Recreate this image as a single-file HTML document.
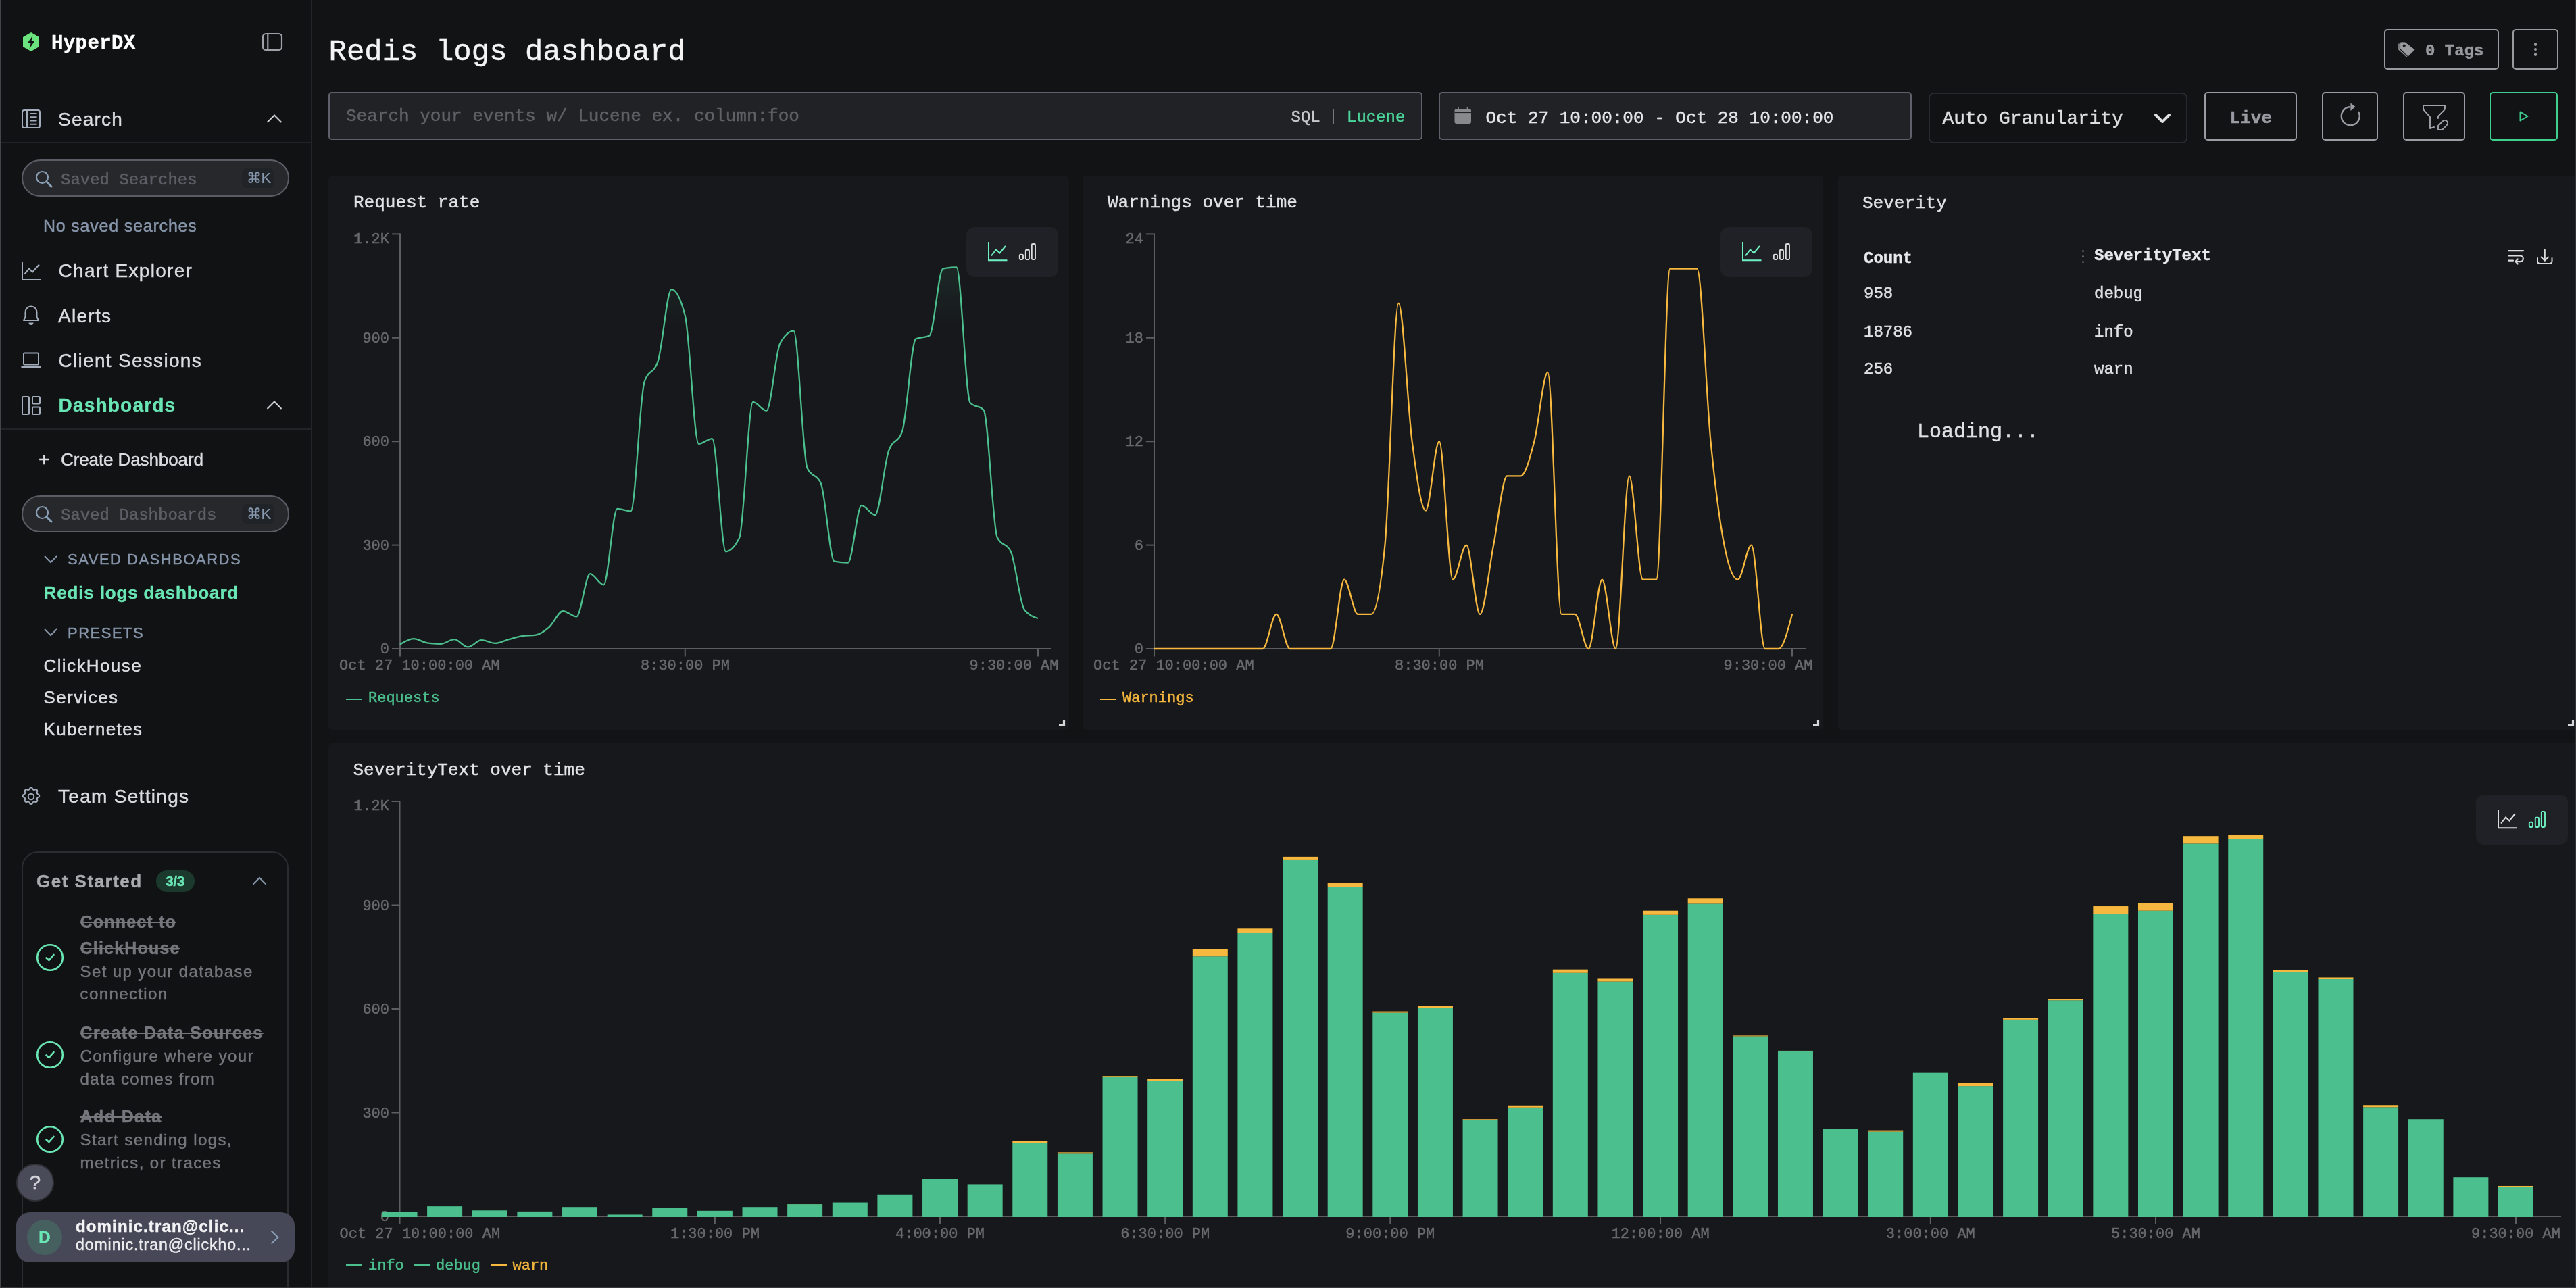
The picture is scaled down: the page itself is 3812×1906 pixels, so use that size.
<!DOCTYPE html><html><head><meta charset="utf-8"><title>Redis logs dashboard</title><style>html,body{margin:0;padding:0;}div{-webkit-text-stroke:0.45px currentColor;}body{width:3812px;height:1906px;overflow:hidden;position:relative;background:#121315;}</style></head><body><div style="position:absolute;left:0;top:0;width:3812px;height:1906px;will-change:transform">
<div style="position:absolute;left:0.0px;top:0.0px;width:460.0px;height:1906.0px;box-sizing:border-box;background:#111214;"></div>
<div style="position:absolute;left:460.0px;top:0.0px;width:2.0px;height:1906.0px;box-sizing:border-box;background:#242528;"></div>
<svg style="position:absolute;left:32.0px;top:46.0px;" width="28.0" height="32.0" viewBox="0 0 28 32" fill="none"><path d="M14 2 L26 9 V23 L14 30 L2 23 V9 Z" fill="#6be47f"/><path d="M16.5 6.5 L8.5 18 H13.5 L11.5 26 L19.5 14.5 H14.5 Z" fill="#121315"/></svg>
<div style="position:absolute;left:76.0px;top:49.68px;font-family:'Liberation Mono', monospace;font-size:29px;line-height:29px;font-weight:700;color:#ffffff;white-space:pre;letter-spacing:0.4px;">HyperDX</div>
<svg style="position:absolute;left:386.0px;top:47.0px;" width="34.0" height="30.0" viewBox="0 0 34 30" fill="none"><rect x="3" y="3" width="28" height="24" rx="4.5" stroke="#a0a1a8" stroke-width="2.2"/><line x1="10.3" y1="3" x2="10.3" y2="27" stroke="#a0a1a8" stroke-width="2.2"/></svg>
<svg style="position:absolute;left:30.0px;top:160.0px;" width="32.0" height="32.0" viewBox="0 0 32 32" fill="none"><rect x="3" y="3" width="26" height="26" rx="3" stroke="#a3adbb" stroke-width="2"/><line x1="10" y1="3" x2="10" y2="29" stroke="#a3adbb" stroke-width="2"/><path d="M14.5 8h10M14.5 13.2h10M14.5 18.5h10M14.5 23.7h10" stroke="#a3adbb" stroke-width="2"/></svg>
<div style="position:absolute;left:86.0px;top:163.09px;font-family:'Liberation Sans', sans-serif;font-size:28px;line-height:28px;font-weight:400;color:#dcdde0;white-space:pre;letter-spacing:1.2px;">Search</div>
<svg style="position:absolute;left:392.0px;top:166.0px;" width="28.0" height="20.0" viewBox="0 0 28 20" fill="none"><path d="M3.5 15 L14 4.5 L24.5 15" stroke="#d0d2d6" stroke-width="2"/></svg>
<div style="position:absolute;left:0.0px;top:210.0px;width:460.0px;height:2.0px;box-sizing:border-box;background:#222326;"></div>
<div style="position:absolute;left:32.0px;top:236.4px;width:396.0px;height:55.0px;box-sizing:border-box;background:#27282c;border:2px solid #5b5c66;border-radius:28px;"></div>
<svg style="position:absolute;left:50.0px;top:249.9px;" width="30.0" height="30.0" viewBox="0 0 30 30" fill="none"><circle cx="12.5" cy="12.5" r="8.5" stroke="#8aa0b6" stroke-width="2.2"/><path d="M18.8 18.8 L26 26" stroke="#8aa0b6" stroke-width="3" stroke-linecap="round"/></svg>
<div style="position:absolute;left:90.0px;top:254.51px;font-family:'Liberation Mono', monospace;font-size:24px;line-height:24px;font-weight:400;color:#5d5f66;white-space:pre;">Saved Searches</div>
<div style="position:absolute;left:358.0px;top:249.4px;width:48.0px;height:29.0px;box-sizing:border-box;background:#202327;border-radius:7px;"></div>
<div style="position:absolute;left:364.5px;top:253.27px;font-family:'Liberation Sans', sans-serif;font-size:22px;line-height:22px;font-weight:400;color:#8698ad;white-space:pre;-webkit-text-stroke:0.2px currentColor;">&#8984;K</div>
<div style="position:absolute;left:64.0px;top:322.03px;font-family:'Liberation Sans', sans-serif;font-size:25px;line-height:25px;font-weight:400;color:#8796ab;white-space:pre;letter-spacing:0.8px;">No saved searches</div>
<svg style="position:absolute;left:30.0px;top:385.0px;" width="32.0" height="32.0" viewBox="0 0 32 32" fill="none"><path d="M3 2 V29 H30" stroke="#a3adbb" stroke-width="2"/><path d="M6.5 20.5 L13 12.5 L18 17.5 L28 6.5" stroke="#a3adbb" stroke-width="2"/></svg>
<div style="position:absolute;left:86.5px;top:387.19px;font-family:'Liberation Sans', sans-serif;font-size:28px;line-height:28px;font-weight:400;color:#dcdde0;white-space:pre;letter-spacing:1.3px;">Chart Explorer</div>
<svg style="position:absolute;left:30.0px;top:450.0px;" width="32.0" height="34.0" viewBox="0 0 32 34" fill="none"><path d="M16 3.5 c-5.2 0 -8.5 4 -8.5 9 v6.5 l-2.5 5 h22 l-2.5 -5 v-6.5 c0 -5 -3.3 -9 -8.5 -9 z" stroke="#a3adbb" stroke-width="2" stroke-linejoin="round"/><path d="M12.5 27.5 a3.5 3.5 0 0 0 7 0 z" fill="#a3adbb"/></svg>
<div style="position:absolute;left:86.0px;top:453.59px;font-family:'Liberation Sans', sans-serif;font-size:28px;line-height:28px;font-weight:400;color:#dcdde0;white-space:pre;letter-spacing:1.3px;">Alerts</div>
<svg style="position:absolute;left:30.0px;top:518.0px;" width="32.0" height="30.0" viewBox="0 0 32 30" fill="none"><rect x="5" y="4.5" width="22" height="17" rx="1.5" stroke="#a3adbb" stroke-width="2"/><path d="M2.5 25 H29.5" stroke="#a3adbb" stroke-width="2.4" stroke-linecap="round"/></svg>
<div style="position:absolute;left:86.5px;top:519.89px;font-family:'Liberation Sans', sans-serif;font-size:28px;line-height:28px;font-weight:400;color:#dcdde0;white-space:pre;letter-spacing:1.3px;">Client Sessions</div>
<svg style="position:absolute;left:30.0px;top:584.0px;" width="32.0" height="32.0" viewBox="0 0 32 32" fill="none"><rect x="3" y="3" width="10" height="26" rx="1.5" stroke="#a3adbb" stroke-width="2"/><rect x="18" y="3" width="11" height="10.5" rx="1.5" stroke="#a3adbb" stroke-width="2"/><rect x="18" y="18.5" width="11" height="10.5" rx="1.5" stroke="#a3adbb" stroke-width="2"/></svg>
<div style="position:absolute;left:86.5px;top:586.29px;font-family:'Liberation Sans', sans-serif;font-size:28px;line-height:28px;font-weight:700;color:#6ae6b5;white-space:pre;letter-spacing:1.2px;">Dashboards</div>
<svg style="position:absolute;left:392.0px;top:590.0px;" width="28.0" height="20.0" viewBox="0 0 28 20" fill="none"><path d="M3.5 15 L14 4.5 L24.5 15" stroke="#d0d2d6" stroke-width="2"/></svg>
<div style="position:absolute;left:0.0px;top:634.0px;width:460.0px;height:2.0px;box-sizing:border-box;background:#222326;"></div>
<div style="position:absolute;left:57.0px;top:666.79px;font-family:'Liberation Sans', sans-serif;font-size:26px;line-height:26px;font-weight:400;color:#dcdde0;white-space:pre;font-size:28px;">+</div>
<div style="position:absolute;left:90.0px;top:666.79px;font-family:'Liberation Sans', sans-serif;font-size:26px;line-height:26px;font-weight:400;color:#dcdde0;white-space:pre;letter-spacing:-0.1px;">Create Dashboard</div>
<div style="position:absolute;left:32.0px;top:732.5px;width:396.0px;height:55.3px;box-sizing:border-box;background:#27282c;border:2px solid #5b5c66;border-radius:28px;"></div>
<svg style="position:absolute;left:50.0px;top:746.1px;" width="30.0" height="30.0" viewBox="0 0 30 30" fill="none"><circle cx="12.5" cy="12.5" r="8.5" stroke="#8aa0b6" stroke-width="2.2"/><path d="M18.8 18.8 L26 26" stroke="#8aa0b6" stroke-width="3" stroke-linecap="round"/></svg>
<div style="position:absolute;left:90.0px;top:750.76px;font-family:'Liberation Mono', monospace;font-size:24px;line-height:24px;font-weight:400;color:#5d5f66;white-space:pre;">Saved Dashboards</div>
<div style="position:absolute;left:358.0px;top:745.6px;width:48.0px;height:29.0px;box-sizing:border-box;background:#202327;border-radius:7px;"></div>
<div style="position:absolute;left:364.5px;top:749.52px;font-family:'Liberation Sans', sans-serif;font-size:22px;line-height:22px;font-weight:400;color:#8698ad;white-space:pre;-webkit-text-stroke:0.2px currentColor;">&#8984;K</div>
<svg style="position:absolute;left:63.0px;top:818.0px;" width="24.0" height="18.0" viewBox="0 0 24 18" fill="none"><path d="M3 5 L12 14 L21 5" stroke="#8796ab" stroke-width="2"/></svg>
<div style="position:absolute;left:100.0px;top:817.17px;font-family:'Liberation Sans', sans-serif;font-size:22px;line-height:22px;font-weight:400;color:#8796ab;white-space:pre;letter-spacing:1.5px;">SAVED DASHBOARDS</div>
<div style="position:absolute;left:64.5px;top:863.89px;font-family:'Liberation Sans', sans-serif;font-size:26px;line-height:26px;font-weight:700;color:#6ae6b5;white-space:pre;letter-spacing:0.85px;">Redis logs dashboard</div>
<svg style="position:absolute;left:63.0px;top:926.0px;" width="24.0" height="18.0" viewBox="0 0 24 18" fill="none"><path d="M3 5 L12 14 L21 5" stroke="#8796ab" stroke-width="2"/></svg>
<div style="position:absolute;left:100.0px;top:925.67px;font-family:'Liberation Sans', sans-serif;font-size:22px;line-height:22px;font-weight:400;color:#8796ab;white-space:pre;letter-spacing:1.5px;">PRESETS</div>
<div style="position:absolute;left:64.5px;top:971.69px;font-family:'Liberation Sans', sans-serif;font-size:26px;line-height:26px;font-weight:400;color:#dcdde2;white-space:pre;letter-spacing:1.4px;">ClickHouse</div>
<div style="position:absolute;left:64.5px;top:1019.19px;font-family:'Liberation Sans', sans-serif;font-size:26px;line-height:26px;font-weight:400;color:#dcdde2;white-space:pre;letter-spacing:1.4px;">Services</div>
<div style="position:absolute;left:64.5px;top:1066.19px;font-family:'Liberation Sans', sans-serif;font-size:26px;line-height:26px;font-weight:400;color:#dcdde2;white-space:pre;letter-spacing:1.4px;">Kubernetes</div>
<svg style="position:absolute;left:30.0px;top:1163.0px;" width="32.0" height="32.0" viewBox="0 0 32 32" fill="none"><path d="M13.7 4.2 c.6-2.4 4-2.4 4.6 0 a2.4 2.4 0 0 0 3.5 1.5 c2.1-1.3 4.5 1.1 3.2 3.2 a2.4 2.4 0 0 0 1.5 3.5 c2.4.6 2.4 4 0 4.6 a2.4 2.4 0 0 0 -1.5 3.5 c1.3 2.1-1.1 4.5-3.2 3.2 a2.4 2.4 0 0 0 -3.5 1.5 c-.6 2.4-4 2.4-4.6 0 a2.4 2.4 0 0 0 -3.5 -1.5 c-2.1 1.3-4.5-1.1-3.2-3.2 a2.4 2.4 0 0 0 -1.5 -3.5 c-2.4-.6-2.4-4 0-4.6 a2.4 2.4 0 0 0 1.5 -3.5 c-1.3-2.1 1.1-4.5 3.2-3.2 a2.4 2.4 0 0 0 3.5 -1.5z" stroke="#a3adbb" stroke-width="2"/><circle cx="16" cy="16" r="4.3" stroke="#a3adbb" stroke-width="2"/></svg>
<div style="position:absolute;left:86.0px;top:1165.29px;font-family:'Liberation Sans', sans-serif;font-size:28px;line-height:28px;font-weight:400;color:#dcdde0;white-space:pre;letter-spacing:1.3px;">Team Settings</div>
<div style="position:absolute;left:32.3px;top:1260.2px;width:395.2px;height:729.8px;box-sizing:border-box;border:2px solid #2b2c30;border-radius:24px;"></div>
<div style="position:absolute;left:54.0px;top:1290.99px;font-family:'Liberation Sans', sans-serif;font-size:26px;line-height:26px;font-weight:700;color:#a9aaae;white-space:pre;letter-spacing:1.5px;">Get Started</div>
<div style="position:absolute;left:231.0px;top:1288.0px;width:56.6px;height:31.7px;box-sizing:border-box;background:#1b3a2d;border-radius:16px;"></div>
<div style="position:absolute;left:-1740.7px;width:4000px;text-align:center;top:1293.67px;font-family:'Liberation Sans', sans-serif;font-size:20px;line-height:20px;font-weight:700;color:#6ae6b5;white-space:pre;">3/3</div>
<svg style="position:absolute;left:370.0px;top:1294.0px;" width="28.0" height="20.0" viewBox="0 0 28 20" fill="none"><path d="M4.5 14.5 L14 5 L23.5 14.5" stroke="#8796ab" stroke-width="2"/></svg>
<svg style="position:absolute;left:52.0px;top:1395.0px;" width="44.0" height="44.0" viewBox="0 0 44 44" fill="none"><circle cx="22" cy="22" r="18.8" stroke="#6ae6b5" stroke-width="2.6"/><path d="M16.5 22.5 L20.5 26 L27.5 18" stroke="#6ae6b5" stroke-width="2.6" stroke-linecap="round" stroke-linejoin="round"/></svg>
<div style="position:absolute;left:118.5px;top:1352.43px;font-family:'Liberation Sans', sans-serif;font-size:25px;line-height:25px;font-weight:700;color:#76777d;white-space:pre;letter-spacing:1.2px;text-decoration:line-through;text-decoration-thickness:2px;">Connect to</div>
<div style="position:absolute;left:118.5px;top:1390.83px;font-family:'Liberation Sans', sans-serif;font-size:25px;line-height:25px;font-weight:700;color:#76777d;white-space:pre;letter-spacing:1.2px;text-decoration:line-through;text-decoration-thickness:2px;">ClickHouse</div>
<div style="position:absolute;left:118.5px;top:1425.68px;font-family:'Liberation Sans', sans-serif;font-size:24px;line-height:24px;font-weight:400;color:#76777d;white-space:pre;letter-spacing:1.4px;">Set up your database</div>
<div style="position:absolute;left:118.5px;top:1459.48px;font-family:'Liberation Sans', sans-serif;font-size:24px;line-height:24px;font-weight:400;color:#76777d;white-space:pre;letter-spacing:1.4px;">connection</div>
<svg style="position:absolute;left:52.0px;top:1539.0px;" width="44.0" height="44.0" viewBox="0 0 44 44" fill="none"><circle cx="22" cy="22" r="18.8" stroke="#6ae6b5" stroke-width="2.6"/><path d="M16.5 22.5 L20.5 26 L27.5 18" stroke="#6ae6b5" stroke-width="2.6" stroke-linecap="round" stroke-linejoin="round"/></svg>
<div style="position:absolute;left:118.5px;top:1515.53px;font-family:'Liberation Sans', sans-serif;font-size:25px;line-height:25px;font-weight:700;color:#76777d;white-space:pre;letter-spacing:1.4px;text-decoration:line-through;text-decoration-thickness:2px;">Create Data Sources</div>
<div style="position:absolute;left:118.5px;top:1550.68px;font-family:'Liberation Sans', sans-serif;font-size:24px;line-height:24px;font-weight:400;color:#76777d;white-space:pre;letter-spacing:1.4px;">Configure where your</div>
<div style="position:absolute;left:118.5px;top:1584.68px;font-family:'Liberation Sans', sans-serif;font-size:24px;line-height:24px;font-weight:400;color:#76777d;white-space:pre;letter-spacing:1.4px;">data comes from</div>
<svg style="position:absolute;left:52.0px;top:1664.2px;" width="44.0" height="44.0" viewBox="0 0 44 44" fill="none"><circle cx="22" cy="22" r="18.8" stroke="#6ae6b5" stroke-width="2.6"/><path d="M16.5 22.5 L20.5 26 L27.5 18" stroke="#6ae6b5" stroke-width="2.6" stroke-linecap="round" stroke-linejoin="round"/></svg>
<div style="position:absolute;left:118.5px;top:1639.73px;font-family:'Liberation Sans', sans-serif;font-size:25px;line-height:25px;font-weight:700;color:#76777d;white-space:pre;letter-spacing:1.4px;text-decoration:line-through;text-decoration-thickness:2px;">Add Data</div>
<div style="position:absolute;left:118.5px;top:1675.08px;font-family:'Liberation Sans', sans-serif;font-size:24px;line-height:24px;font-weight:400;color:#76777d;white-space:pre;letter-spacing:1.4px;">Start sending logs,</div>
<div style="position:absolute;left:118.5px;top:1708.78px;font-family:'Liberation Sans', sans-serif;font-size:24px;line-height:24px;font-weight:400;color:#76777d;white-space:pre;letter-spacing:1.4px;">metrics, or traces</div>
<div style="position:absolute;left:24.0px;top:1722.3px;width:55.5px;height:55.4px;box-sizing:border-box;background:#4a4b59;border:2px solid #2f3036;border-radius:28px;"></div>
<div style="position:absolute;left:-1948.2px;width:4000px;text-align:center;top:1734.60px;font-family:'Liberation Sans', sans-serif;font-size:30px;line-height:30px;font-weight:400;color:#d3d3da;white-space:pre;">?</div>
<div style="position:absolute;left:24.0px;top:1794.3px;width:411.7px;height:73.6px;box-sizing:border-box;background:#474857;border-radius:20px;"></div>
<div style="position:absolute;left:40.0px;top:1805.0px;width:52.0px;height:52.0px;box-sizing:border-box;background:#46605f;border-radius:26px;"></div>
<div style="position:absolute;left:-1934.0px;width:4000px;text-align:center;top:1819.18px;font-family:'Liberation Sans', sans-serif;font-size:24px;line-height:24px;font-weight:700;color:#6ae6b5;white-space:pre;">D</div>
<div style="position:absolute;left:112.0px;top:1802.88px;font-family:'Liberation Sans', sans-serif;font-size:24px;line-height:24px;font-weight:700;color:#f4f4f6;white-space:pre;letter-spacing:1.15px;">dominic.tran@clic...</div>
<div style="position:absolute;left:112.0px;top:1831.43px;font-family:'Liberation Sans', sans-serif;font-size:23px;line-height:23px;font-weight:400;color:#ededf0;white-space:pre;letter-spacing:0.95px;">dominic.tran@clickho...</div>
<svg style="position:absolute;left:396.0px;top:1818.0px;" width="22.0" height="26.0" viewBox="0 0 22 26" fill="none"><path d="M5.5 3.5 L15.5 13 L5.5 22.5" stroke="#8aa0b8" stroke-width="2"/></svg>
<div style="position:absolute;left:486.5px;top:55.49px;font-family:'Liberation Mono', monospace;font-size:44px;line-height:44px;font-weight:400;color:#f4f4f5;white-space:pre;">Redis logs dashboard</div>
<div style="position:absolute;left:3528.2px;top:43.0px;width:169.4px;height:59.5px;box-sizing:border-box;border:2px solid #9a9a9e;border-radius:5px;"></div>
<svg style="position:absolute;left:3546.0px;top:59.0px;" width="30.0" height="28.0" viewBox="0 0 30 28" fill="none"><path d="M6.3 4.4 Q6.3 3.9 6.8 3.9 H13.1 L27 14.6 L17.6 24 L6.3 12.9 Z" fill="#9a9a9e" stroke="#9a9a9e" stroke-width="1" stroke-linejoin="round"/><circle cx="11.7" cy="8.4" r="2" fill="#121315"/><path d="M4 5.6 V14.1 L15.9 25.2" stroke="#9a9a9e" stroke-width="1.5"/></svg>
<div style="position:absolute;left:3589.0px;top:64.01px;font-family:'Liberation Mono', monospace;font-size:24px;line-height:24px;font-weight:700;color:#9a9a9e;white-space:pre;">0 Tags</div>
<div style="position:absolute;left:3718.4px;top:43.0px;width:67.4px;height:59.5px;box-sizing:border-box;border:2px solid #9a9a9e;border-radius:5px;"></div>
<div style="position:absolute;left:3749.7px;top:63.1px;width:4.6px;height:4.6px;box-sizing:border-box;background:#9a9a9e;border-radius:3px;"></div>
<div style="position:absolute;left:3749.7px;top:70.8px;width:4.6px;height:4.6px;box-sizing:border-box;background:#9a9a9e;border-radius:3px;"></div>
<div style="position:absolute;left:3749.7px;top:78.4px;width:4.6px;height:4.6px;box-sizing:border-box;background:#9a9a9e;border-radius:3px;"></div>
<div style="position:absolute;left:486.0px;top:136.2px;width:1618.5px;height:71.3px;box-sizing:border-box;background:#212226;border:2px solid #5f606b;border-radius:5px;"></div>
<div style="position:absolute;left:512.0px;top:159.08px;font-family:'Liberation Mono', monospace;font-size:26px;line-height:26px;font-weight:400;color:#5f6167;white-space:pre;">Search your events w/ Lucene ex. column:foo</div>
<div style="position:absolute;left:1910.5px;top:161.91px;font-family:'Liberation Mono', monospace;font-size:24px;line-height:24px;font-weight:400;color:#c9c9cc;white-space:pre;">SQL</div>
<div style="position:absolute;left:1972.2px;top:161.0px;width:2.2px;height:22.5px;box-sizing:border-box;background:#77787d;"></div>
<div style="position:absolute;left:1993.0px;top:161.91px;font-family:'Liberation Mono', monospace;font-size:24px;line-height:24px;font-weight:400;color:#4cd69b;white-space:pre;">Lucene</div>
<div style="position:absolute;left:2129.2px;top:136.2px;width:699.5px;height:71.3px;box-sizing:border-box;background:#212226;border:2px solid #5f606b;border-radius:5px;"></div>
<svg style="position:absolute;left:2150.0px;top:157.0px;" width="30.0" height="28.0" viewBox="0 0 30 28" fill="none"><rect x="2.5" y="4" width="24.5" height="22" rx="3" fill="#88898d"/><path d="M2.5 9.5 H27" stroke="#212226" stroke-width="1.2"/><path d="M8 2 V5 M21.5 2 V5" stroke="#88898d" stroke-width="1.6"/></svg>
<div style="position:absolute;left:2198.5px;top:162.38px;font-family:'Liberation Mono', monospace;font-size:26px;line-height:26px;font-weight:400;color:#e6e6e8;white-space:pre;">Oct 27 10:00:00 - Oct 28 10:00:00</div>
<div style="position:absolute;left:2853.7px;top:136.5px;width:383.3px;height:75.0px;box-sizing:border-box;background:#111214;border:2px solid #27282c;border-radius:8px;"></div>
<div style="position:absolute;left:2874.5px;top:162.35px;font-family:'Liberation Mono', monospace;font-size:28px;line-height:28px;font-weight:400;color:#dedee0;white-space:pre;letter-spacing:-0.1px;">Auto Granularity</div>
<svg style="position:absolute;left:3184.0px;top:162.0px;" width="32.0" height="26.0" viewBox="0 0 32 26" fill="none"><path d="M6 8 L16 18 L26 8" stroke="#e0e0e2" stroke-width="4" stroke-linecap="round" stroke-linejoin="round"/></svg>
<div style="position:absolute;left:3262.1px;top:136.3px;width:137.4px;height:71.3px;box-sizing:border-box;border:2px solid #9b9ca3;border-radius:5px;"></div>
<div style="position:absolute;left:1330.8px;width:4000px;text-align:center;top:162.38px;font-family:'Liberation Mono', monospace;font-size:26px;line-height:26px;font-weight:700;color:#9b9ca3;white-space:pre;">Live</div>
<div style="position:absolute;left:3436.2px;top:136.3px;width:83.3px;height:71.3px;box-sizing:border-box;border:2px solid #9b9ca3;border-radius:5px;"></div>
<svg style="position:absolute;left:3458.0px;top:150.0px;" width="40.0" height="40.0" viewBox="0 0 40 40" fill="none"><path d="M20.2 8.3 A13.5 13.5 0 1 0 31.9 15" stroke="#9b9ca3" stroke-width="2.4"/><path d="M20.4 2.6 L27.6 8 L20.4 13.9 Z" fill="#9b9ca3"/></svg>
<div style="position:absolute;left:3556.4px;top:136.3px;width:91.3px;height:71.3px;box-sizing:border-box;border:2px solid #9b9ca3;border-radius:5px;"></div>
<svg style="position:absolute;left:3577.7px;top:147.5px;" width="48.0" height="48.0" viewBox="0 0 48 48" fill="none"><g transform="scale(2)"><path d="M12 20l-3 1v-8.5l-4.48 -4.928a2 2 0 0 1 -.52 -1.345v-2.227h16v2.172a2 2 0 0 1 -.586 1.414l-4.414 4.414v1.5" stroke="#a3a4ab" stroke-width="0.95" stroke-linecap="round" stroke-linejoin="round"/><path d="M18.42 15.61a2.1 2.1 0 0 1 2.97 2.97l-3.39 3.42h-3v-3l3.42 -3.39z" stroke="#a3a4ab" stroke-width="0.95" stroke-linecap="round" stroke-linejoin="round"/></g></svg>
<div style="position:absolute;left:3684.1px;top:136.3px;width:101.4px;height:71.3px;box-sizing:border-box;border:2px solid #3fd08f;border-radius:5px;"></div>
<svg style="position:absolute;left:3724.0px;top:161.0px;" width="22.0" height="22.0" viewBox="0 0 22 22" fill="none"><path d="M5.5 4.5 L16.5 11 L5.5 17.5 Z" stroke="#3fd08f" stroke-width="2" stroke-linejoin="round"/></svg>
<div style="position:absolute;left:486.0px;top:260.0px;width:1096.0px;height:820.0px;box-sizing:border-box;background:#17181b;border-radius:5px;"></div>
<div style="position:absolute;left:1602.0px;top:260.0px;width:1096.0px;height:820.0px;box-sizing:border-box;background:#17181b;border-radius:5px;"></div>
<div style="position:absolute;left:2720.0px;top:260.0px;width:1110.0px;height:820.0px;box-sizing:border-box;background:#17181b;border-radius:5px;"></div>
<div style="position:absolute;left:486.0px;top:1100.0px;width:3344.0px;height:890.0px;box-sizing:border-box;background:#17181b;border-radius:5px;"></div>
<div style="position:absolute;left:523.0px;top:287.48px;font-family:'Liberation Mono', monospace;font-size:26px;line-height:26px;font-weight:400;color:#e2e2e5;white-space:pre;">Request rate</div>
<div style="position:absolute;left:1430.0px;top:336.0px;width:136.0px;height:74.0px;box-sizing:border-box;background:#1f2126;border-radius:12px;"></div>
<svg style="position:absolute;left:1430.0px;top:336.0px;" width="136.0" height="74.0" viewBox="0 0 136 74" fill="none"><path d="M33 22 V49.2 H60.5" stroke="#6ff1c2" stroke-width="2"/><path d="M37 42.5 L44 33.5 L49.5 38.5 L58 28" stroke="#6ff1c2" stroke-width="2"/><rect x="78.8" y="40.8" width="5.2" height="7.2" rx="1.4" stroke="#dddddd" stroke-width="1.9"/><rect x="87.8" y="33.8" width="5.2" height="14.2" rx="1.4" stroke="#dddddd" stroke-width="1.9"/><rect x="96.8" y="25" width="5.2" height="23" rx="1.4" stroke="#dddddd" stroke-width="1.9"/></svg>
<svg style="position:absolute;left:1566.0px;top:1064.0px;" width="11.0" height="11.0" viewBox="0 0 11 11" fill="none"><path d="M1 8.5 H8.5 V1" stroke="#d6d6d6" stroke-width="3.2"/></svg>
<svg style="position:absolute;left:0;top:0" width="3812" height="1100" viewBox="0 0 3812 1100"><rect x="591" y="345.4" width="2" height="614.6" fill="#5e5e60"/><rect x="592" y="959.0" width="964" height="2" fill="#5e5e60"/><rect x="580" y="959.0" width="12" height="2" fill="#5e5e60"/><rect x="580" y="805.6" width="12" height="2" fill="#5e5e60"/><rect x="580" y="652.2" width="12" height="2" fill="#5e5e60"/><rect x="580" y="498.8" width="12" height="2" fill="#5e5e60"/><rect x="580" y="345.4" width="12" height="2" fill="#5e5e60"/><rect x="591.0" y="960.0" width="2" height="11.5" fill="#5e5e60"/><rect x="1012.7872340425531" y="960.0" width="2" height="11.5" fill="#5e5e60"/><rect x="1535.0" y="960.0" width="2" height="11.5" fill="#5e5e60"/><defs><linearGradient id="g1" x1="0" y1="395.5" x2="0" y2="960.0" gradientUnits="userSpaceOnUse"><stop offset="0" stop-color="#4cbf8e" stop-opacity="0.1"/><stop offset="0.16" stop-color="#4cbf8e" stop-opacity="0"/></linearGradient></defs><path d="M592.00,953.61C598.70,949.39 605.39,945.17 612.09,945.17C618.78,945.17 625.48,950.28 632.17,951.31C638.87,952.33 645.56,952.84 652.26,952.84C658.95,952.84 665.65,946.19 672.34,946.19C679.04,946.19 685.73,957.44 692.43,957.44C699.12,957.44 705.82,947.22 712.51,947.22C719.21,947.22 725.90,951.82 732.60,951.82C739.29,951.82 745.99,947.98 752.68,946.19C759.38,944.40 766.07,942.10 772.77,941.08C779.46,940.06 786.16,940.57 792.85,939.55C799.55,938.52 806.24,933.67 812.94,927.79C819.63,921.91 826.33,904.26 833.02,904.26C839.72,904.26 846.41,912.45 853.11,912.45C859.80,912.45 866.50,849.04 873.19,849.04C879.89,849.04 886.58,865.40 893.28,865.40C899.97,865.40 906.67,752.91 913.36,752.91C920.06,752.91 926.75,756.49 933.45,756.49C940.14,756.49 946.84,585.70 953.53,565.25C960.23,544.80 966.92,555.02 973.62,534.57C980.31,514.12 987.01,428.21 993.70,428.21C1000.40,428.21 1007.09,441.17 1013.79,467.07C1020.48,492.98 1027.18,656.78 1033.87,656.78C1040.57,656.78 1047.26,649.11 1053.96,649.11C1060.65,649.11 1067.35,816.32 1074.04,816.32C1080.74,816.32 1087.43,809.50 1094.13,795.86C1100.82,782.23 1107.52,594.91 1114.21,594.91C1120.91,594.91 1127.60,607.69 1134.30,607.69C1140.99,607.69 1147.69,520.25 1154.38,507.98C1161.08,495.71 1167.77,489.57 1174.47,489.57C1181.16,489.57 1187.86,677.57 1194.55,692.57C1201.25,707.57 1207.94,700.07 1214.64,715.07C1221.33,730.07 1228.03,829.27 1234.72,830.63C1241.42,832.00 1248.11,832.68 1254.81,832.68C1261.50,832.68 1268.20,747.80 1274.89,747.80C1281.59,747.80 1288.28,762.11 1294.98,762.11C1301.67,762.11 1308.37,686.10 1315.06,667.01C1321.76,647.92 1328.45,657.46 1335.15,638.37C1341.84,619.28 1348.54,504.40 1355.23,501.33C1361.93,498.27 1368.62,499.80 1375.32,496.73C1382.01,493.66 1388.71,398.90 1395.40,397.53C1402.10,396.17 1408.79,395.49 1415.49,395.49C1422.18,395.49 1428.88,588.77 1435.57,595.93C1442.27,603.09 1448.96,599.51 1455.66,606.67C1462.35,613.83 1469.05,781.37 1475.74,795.35C1482.44,809.33 1489.13,802.34 1495.83,816.32C1502.52,830.29 1509.22,893.70 1515.91,902.22C1522.61,910.74 1529.30,912.87 1536.00,915.00L1536.00,960.0L592.00,960.0Z" fill="url(#g1)"/><path d="M592.00,953.61C598.70,949.39 605.39,945.17 612.09,945.17C618.78,945.17 625.48,950.28 632.17,951.31C638.87,952.33 645.56,952.84 652.26,952.84C658.95,952.84 665.65,946.19 672.34,946.19C679.04,946.19 685.73,957.44 692.43,957.44C699.12,957.44 705.82,947.22 712.51,947.22C719.21,947.22 725.90,951.82 732.60,951.82C739.29,951.82 745.99,947.98 752.68,946.19C759.38,944.40 766.07,942.10 772.77,941.08C779.46,940.06 786.16,940.57 792.85,939.55C799.55,938.52 806.24,933.67 812.94,927.79C819.63,921.91 826.33,904.26 833.02,904.26C839.72,904.26 846.41,912.45 853.11,912.45C859.80,912.45 866.50,849.04 873.19,849.04C879.89,849.04 886.58,865.40 893.28,865.40C899.97,865.40 906.67,752.91 913.36,752.91C920.06,752.91 926.75,756.49 933.45,756.49C940.14,756.49 946.84,585.70 953.53,565.25C960.23,544.80 966.92,555.02 973.62,534.57C980.31,514.12 987.01,428.21 993.70,428.21C1000.40,428.21 1007.09,441.17 1013.79,467.07C1020.48,492.98 1027.18,656.78 1033.87,656.78C1040.57,656.78 1047.26,649.11 1053.96,649.11C1060.65,649.11 1067.35,816.32 1074.04,816.32C1080.74,816.32 1087.43,809.50 1094.13,795.86C1100.82,782.23 1107.52,594.91 1114.21,594.91C1120.91,594.91 1127.60,607.69 1134.30,607.69C1140.99,607.69 1147.69,520.25 1154.38,507.98C1161.08,495.71 1167.77,489.57 1174.47,489.57C1181.16,489.57 1187.86,677.57 1194.55,692.57C1201.25,707.57 1207.94,700.07 1214.64,715.07C1221.33,730.07 1228.03,829.27 1234.72,830.63C1241.42,832.00 1248.11,832.68 1254.81,832.68C1261.50,832.68 1268.20,747.80 1274.89,747.80C1281.59,747.80 1288.28,762.11 1294.98,762.11C1301.67,762.11 1308.37,686.10 1315.06,667.01C1321.76,647.92 1328.45,657.46 1335.15,638.37C1341.84,619.28 1348.54,504.40 1355.23,501.33C1361.93,498.27 1368.62,499.80 1375.32,496.73C1382.01,493.66 1388.71,398.90 1395.40,397.53C1402.10,396.17 1408.79,395.49 1415.49,395.49C1422.18,395.49 1428.88,588.77 1435.57,595.93C1442.27,603.09 1448.96,599.51 1455.66,606.67C1462.35,613.83 1469.05,781.37 1475.74,795.35C1482.44,809.33 1489.13,802.34 1495.83,816.32C1502.52,830.29 1509.22,893.70 1515.91,902.22C1522.61,910.74 1529.30,912.87 1536.00,915.00" stroke="#4cbf8e" stroke-width="2.3" fill="none" stroke-linejoin="round"/></svg>
<div style="position:absolute;right:3236.0px;top:951.15px;font-family:'Liberation Mono', monospace;font-size:22px;line-height:22px;font-weight:400;color:#6b6b6e;white-space:pre;">0</div>
<div style="position:absolute;right:3236.0px;top:797.75px;font-family:'Liberation Mono', monospace;font-size:22px;line-height:22px;font-weight:400;color:#6b6b6e;white-space:pre;">300</div>
<div style="position:absolute;right:3236.0px;top:644.35px;font-family:'Liberation Mono', monospace;font-size:22px;line-height:22px;font-weight:400;color:#6b6b6e;white-space:pre;">600</div>
<div style="position:absolute;right:3236.0px;top:490.95px;font-family:'Liberation Mono', monospace;font-size:22px;line-height:22px;font-weight:400;color:#6b6b6e;white-space:pre;">900</div>
<div style="position:absolute;right:3236.0px;top:343.55px;font-family:'Liberation Mono', monospace;font-size:22px;line-height:22px;font-weight:400;color:#6b6b6e;white-space:pre;">1.2K</div>
<div style="position:absolute;left:502.0px;top:975.15px;font-family:'Liberation Mono', monospace;font-size:22px;line-height:22px;font-weight:400;color:#6b6b6e;white-space:pre;">Oct 27 10:00:00 AM</div>
<div style="position:absolute;left:-986.0px;width:4000px;text-align:center;top:975.15px;font-family:'Liberation Mono', monospace;font-size:22px;line-height:22px;font-weight:400;color:#6b6b6e;white-space:pre;">8:30:00 PM</div>
<div style="position:absolute;left:1434.5px;top:975.15px;font-family:'Liberation Mono', monospace;font-size:22px;line-height:22px;font-weight:400;color:#6b6b6e;white-space:pre;">9:30:00 AM</div>
<div style="position:absolute;left:512.0px;top:1034.0px;width:24.0px;height:2.0px;box-sizing:border-box;background:#4cbf8e;"></div>
<div style="position:absolute;left:545.0px;top:1023.15px;font-family:'Liberation Mono', monospace;font-size:22px;line-height:22px;font-weight:400;color:#4cbf8e;white-space:pre;">Requests</div>
<div style="position:absolute;left:1639.0px;top:287.48px;font-family:'Liberation Mono', monospace;font-size:26px;line-height:26px;font-weight:400;color:#e2e2e5;white-space:pre;">Warnings over time</div>
<div style="position:absolute;left:2546.0px;top:336.0px;width:136.0px;height:74.0px;box-sizing:border-box;background:#1f2126;border-radius:12px;"></div>
<svg style="position:absolute;left:2546.0px;top:336.0px;" width="136.0" height="74.0" viewBox="0 0 136 74" fill="none"><path d="M33 22 V49.2 H60.5" stroke="#6ff1c2" stroke-width="2"/><path d="M37 42.5 L44 33.5 L49.5 38.5 L58 28" stroke="#6ff1c2" stroke-width="2"/><rect x="78.8" y="40.8" width="5.2" height="7.2" rx="1.4" stroke="#dddddd" stroke-width="1.9"/><rect x="87.8" y="33.8" width="5.2" height="14.2" rx="1.4" stroke="#dddddd" stroke-width="1.9"/><rect x="96.8" y="25" width="5.2" height="23" rx="1.4" stroke="#dddddd" stroke-width="1.9"/></svg>
<svg style="position:absolute;left:2682.0px;top:1064.0px;" width="11.0" height="11.0" viewBox="0 0 11 11" fill="none"><path d="M1 8.5 H8.5 V1" stroke="#d6d6d6" stroke-width="3.2"/></svg>
<svg style="position:absolute;left:0;top:0" width="3812" height="1100" viewBox="0 0 3812 1100"><rect x="1707" y="345.4" width="2" height="614.6" fill="#5e5e60"/><rect x="1708" y="959.0" width="964" height="2" fill="#5e5e60"/><rect x="1696" y="959.0" width="12" height="2" fill="#5e5e60"/><rect x="1696" y="805.6" width="12" height="2" fill="#5e5e60"/><rect x="1696" y="652.2" width="12" height="2" fill="#5e5e60"/><rect x="1696" y="498.8" width="12" height="2" fill="#5e5e60"/><rect x="1696" y="345.4" width="12" height="2" fill="#5e5e60"/><rect x="1707.0" y="960.0" width="2" height="11.5" fill="#5e5e60"/><rect x="2128.7872340425533" y="960.0" width="2" height="11.5" fill="#5e5e60"/><rect x="2651.0" y="960.0" width="2" height="11.5" fill="#5e5e60"/><defs><linearGradient id="g2" x1="0" y1="397.5" x2="0" y2="960.0" gradientUnits="userSpaceOnUse"><stop offset="0" stop-color="#f6b83f" stop-opacity="0"/><stop offset="0.16" stop-color="#f6b83f" stop-opacity="0"/></linearGradient></defs><path d="M1708.00,960.00C1714.70,960.00 1721.39,960.00 1728.09,960.00C1734.78,960.00 1741.48,960.00 1748.17,960.00C1754.87,960.00 1761.56,960.00 1768.26,960.00C1774.95,960.00 1781.65,960.00 1788.34,960.00C1795.04,960.00 1801.73,960.00 1808.43,960.00C1815.12,960.00 1821.82,960.00 1828.51,960.00C1835.21,960.00 1841.90,960.00 1848.60,960.00C1855.29,960.00 1861.99,960.00 1868.68,960.00C1875.38,960.00 1882.07,908.87 1888.77,908.87C1895.46,908.87 1902.16,960.00 1908.85,960.00C1915.55,960.00 1922.24,960.00 1928.94,960.00C1935.63,960.00 1942.33,960.00 1949.02,960.00C1955.72,960.00 1962.41,960.00 1969.11,960.00C1975.80,960.00 1982.50,857.73 1989.19,857.73C1995.89,857.73 2002.58,908.87 2009.28,908.87C2015.97,908.87 2022.67,908.87 2029.36,908.87C2036.06,908.87 2042.75,874.78 2049.45,806.60C2056.14,738.42 2062.84,448.67 2069.53,448.67C2076.23,448.67 2082.92,602.07 2089.62,653.20C2096.31,704.33 2103.01,755.47 2109.70,755.47C2116.40,755.47 2123.09,653.20 2129.79,653.20C2136.48,653.20 2143.18,857.73 2149.87,857.73C2156.57,857.73 2163.26,806.60 2169.96,806.60C2176.65,806.60 2183.35,908.87 2190.04,908.87C2196.74,908.87 2203.43,840.69 2210.13,806.60C2216.82,772.51 2223.52,704.33 2230.21,704.33C2236.91,704.33 2243.60,704.33 2250.30,704.33C2256.99,704.33 2263.69,678.77 2270.38,653.20C2277.08,627.63 2283.77,550.93 2290.47,550.93C2297.16,550.93 2303.86,908.87 2310.55,908.87C2317.25,908.87 2323.94,908.87 2330.64,908.87C2337.33,908.87 2344.03,960.00 2350.72,960.00C2357.42,960.00 2364.11,857.73 2370.81,857.73C2377.50,857.73 2384.20,960.00 2390.89,960.00C2397.59,960.00 2404.28,704.33 2410.98,704.33C2417.67,704.33 2424.37,857.73 2431.06,857.73C2437.76,857.73 2444.45,857.73 2451.15,857.73C2457.84,857.73 2464.54,397.53 2471.23,397.53C2477.93,397.53 2484.62,397.53 2491.32,397.53C2498.01,397.53 2504.71,397.53 2511.40,397.53C2518.10,397.53 2524.79,585.02 2531.49,653.20C2538.18,721.38 2544.88,772.51 2551.57,806.60C2558.27,840.69 2564.96,857.73 2571.66,857.73C2578.35,857.73 2585.05,806.60 2591.74,806.60C2598.44,806.60 2605.13,960.00 2611.83,960.00C2618.52,960.00 2625.22,960.00 2631.91,960.00C2638.61,960.00 2645.30,934.43 2652.00,908.87L2652.00,960.0L1708.00,960.0Z" fill="url(#g2)"/><path d="M1708.00,960.00C1714.70,960.00 1721.39,960.00 1728.09,960.00C1734.78,960.00 1741.48,960.00 1748.17,960.00C1754.87,960.00 1761.56,960.00 1768.26,960.00C1774.95,960.00 1781.65,960.00 1788.34,960.00C1795.04,960.00 1801.73,960.00 1808.43,960.00C1815.12,960.00 1821.82,960.00 1828.51,960.00C1835.21,960.00 1841.90,960.00 1848.60,960.00C1855.29,960.00 1861.99,960.00 1868.68,960.00C1875.38,960.00 1882.07,908.87 1888.77,908.87C1895.46,908.87 1902.16,960.00 1908.85,960.00C1915.55,960.00 1922.24,960.00 1928.94,960.00C1935.63,960.00 1942.33,960.00 1949.02,960.00C1955.72,960.00 1962.41,960.00 1969.11,960.00C1975.80,960.00 1982.50,857.73 1989.19,857.73C1995.89,857.73 2002.58,908.87 2009.28,908.87C2015.97,908.87 2022.67,908.87 2029.36,908.87C2036.06,908.87 2042.75,874.78 2049.45,806.60C2056.14,738.42 2062.84,448.67 2069.53,448.67C2076.23,448.67 2082.92,602.07 2089.62,653.20C2096.31,704.33 2103.01,755.47 2109.70,755.47C2116.40,755.47 2123.09,653.20 2129.79,653.20C2136.48,653.20 2143.18,857.73 2149.87,857.73C2156.57,857.73 2163.26,806.60 2169.96,806.60C2176.65,806.60 2183.35,908.87 2190.04,908.87C2196.74,908.87 2203.43,840.69 2210.13,806.60C2216.82,772.51 2223.52,704.33 2230.21,704.33C2236.91,704.33 2243.60,704.33 2250.30,704.33C2256.99,704.33 2263.69,678.77 2270.38,653.20C2277.08,627.63 2283.77,550.93 2290.47,550.93C2297.16,550.93 2303.86,908.87 2310.55,908.87C2317.25,908.87 2323.94,908.87 2330.64,908.87C2337.33,908.87 2344.03,960.00 2350.72,960.00C2357.42,960.00 2364.11,857.73 2370.81,857.73C2377.50,857.73 2384.20,960.00 2390.89,960.00C2397.59,960.00 2404.28,704.33 2410.98,704.33C2417.67,704.33 2424.37,857.73 2431.06,857.73C2437.76,857.73 2444.45,857.73 2451.15,857.73C2457.84,857.73 2464.54,397.53 2471.23,397.53C2477.93,397.53 2484.62,397.53 2491.32,397.53C2498.01,397.53 2504.71,397.53 2511.40,397.53C2518.10,397.53 2524.79,585.02 2531.49,653.20C2538.18,721.38 2544.88,772.51 2551.57,806.60C2558.27,840.69 2564.96,857.73 2571.66,857.73C2578.35,857.73 2585.05,806.60 2591.74,806.60C2598.44,806.60 2605.13,960.00 2611.83,960.00C2618.52,960.00 2625.22,960.00 2631.91,960.00C2638.61,960.00 2645.30,934.43 2652.00,908.87" stroke="#f6b83f" stroke-width="2.3" fill="none" stroke-linejoin="round"/></svg>
<div style="position:absolute;right:2120.0px;top:951.15px;font-family:'Liberation Mono', monospace;font-size:22px;line-height:22px;font-weight:400;color:#6b6b6e;white-space:pre;">0</div>
<div style="position:absolute;right:2120.0px;top:797.75px;font-family:'Liberation Mono', monospace;font-size:22px;line-height:22px;font-weight:400;color:#6b6b6e;white-space:pre;">6</div>
<div style="position:absolute;right:2120.0px;top:644.35px;font-family:'Liberation Mono', monospace;font-size:22px;line-height:22px;font-weight:400;color:#6b6b6e;white-space:pre;">12</div>
<div style="position:absolute;right:2120.0px;top:490.95px;font-family:'Liberation Mono', monospace;font-size:22px;line-height:22px;font-weight:400;color:#6b6b6e;white-space:pre;">18</div>
<div style="position:absolute;right:2120.0px;top:343.55px;font-family:'Liberation Mono', monospace;font-size:22px;line-height:22px;font-weight:400;color:#6b6b6e;white-space:pre;">24</div>
<div style="position:absolute;left:1618.0px;top:975.15px;font-family:'Liberation Mono', monospace;font-size:22px;line-height:22px;font-weight:400;color:#6b6b6e;white-space:pre;">Oct 27 10:00:00 AM</div>
<div style="position:absolute;left:130.0px;width:4000px;text-align:center;top:975.15px;font-family:'Liberation Mono', monospace;font-size:22px;line-height:22px;font-weight:400;color:#6b6b6e;white-space:pre;">8:30:00 PM</div>
<div style="position:absolute;left:2550.5px;top:975.15px;font-family:'Liberation Mono', monospace;font-size:22px;line-height:22px;font-weight:400;color:#6b6b6e;white-space:pre;">9:30:00 AM</div>
<div style="position:absolute;left:1628.0px;top:1034.0px;width:24.0px;height:2.0px;box-sizing:border-box;background:#f6b83f;"></div>
<div style="position:absolute;left:1661.0px;top:1023.15px;font-family:'Liberation Mono', monospace;font-size:22px;line-height:22px;font-weight:400;color:#f6b83f;white-space:pre;">Warnings</div>
<div style="position:absolute;left:2756.0px;top:288.38px;font-family:'Liberation Mono', monospace;font-size:26px;line-height:26px;font-weight:400;color:#e2e2e5;white-space:pre;">Severity</div>
<svg style="position:absolute;left:3799.0px;top:1064.0px;" width="11.0" height="11.0" viewBox="0 0 11 11" fill="none"><path d="M1 8.5 H8.5 V1" stroke="#d6d6d6" stroke-width="3.2"/></svg>
<div style="position:absolute;left:2758.0px;top:371.41px;font-family:'Liberation Mono', monospace;font-size:24px;line-height:24px;font-weight:700;color:#e9e9eb;white-space:pre;">Count</div>
<div style="position:absolute;left:3081.3px;top:369.9px;width:3.2px;height:3.2px;box-sizing:border-box;background:#6a6b70;border-radius:2px;"></div>
<div style="position:absolute;left:3081.3px;top:377.9px;width:3.2px;height:3.2px;box-sizing:border-box;background:#6a6b70;border-radius:2px;"></div>
<div style="position:absolute;left:3081.3px;top:385.9px;width:3.2px;height:3.2px;box-sizing:border-box;background:#6a6b70;border-radius:2px;"></div>
<div style="position:absolute;left:3099.0px;top:367.11px;font-family:'Liberation Mono', monospace;font-size:24px;line-height:24px;font-weight:700;color:#e9e9eb;white-space:pre;">SeverityText</div>
<svg style="position:absolute;left:3708.0px;top:366.0px;" width="30.0" height="28.0" viewBox="0 0 30 28" fill="none"><path d="M4 5.2 H26" stroke="#dcdcdc" stroke-width="2.2" stroke-linecap="round"/><path d="M4 12.5 H21.5 a4.3 4.3 0 0 1 0 8.6 H15" stroke="#dcdcdc" stroke-width="2.2" stroke-linecap="round"/><path d="M4 19.7 H11" stroke="#dcdcdc" stroke-width="2.2" stroke-linecap="round"/><path d="M17.8 17.5 L14.5 21 L17.8 24.5" stroke="#dcdcdc" stroke-width="2.2" stroke-linecap="round" stroke-linejoin="round"/></svg>
<svg style="position:absolute;left:3750.0px;top:366.0px;" width="32.0" height="28.0" viewBox="0 0 32 28" fill="none"><path d="M15.8 3.5 V19.5 M10.5 14.5 L15.8 19.8 L21 14.5" stroke="#dcdcdc" stroke-width="2" stroke-linecap="round" stroke-linejoin="round"/><path d="M5 16 V20.5 a3.5 3.5 0 0 0 3.5 3.5 H23 a3.5 3.5 0 0 0 3.5 -3.5 V16" stroke="#dcdcdc" stroke-width="2" stroke-linecap="round"/></svg>
<div style="position:absolute;left:2758.0px;top:422.61px;font-family:'Liberation Mono', monospace;font-size:24px;line-height:24px;font-weight:400;color:#e2e2e5;white-space:pre;">958</div>
<div style="position:absolute;left:3099.0px;top:422.61px;font-family:'Liberation Mono', monospace;font-size:24px;line-height:24px;font-weight:400;color:#e2e2e5;white-space:pre;">debug</div>
<div style="position:absolute;left:2758.0px;top:479.61px;font-family:'Liberation Mono', monospace;font-size:24px;line-height:24px;font-weight:400;color:#e2e2e5;white-space:pre;">18786</div>
<div style="position:absolute;left:3099.0px;top:479.61px;font-family:'Liberation Mono', monospace;font-size:24px;line-height:24px;font-weight:400;color:#e2e2e5;white-space:pre;">info</div>
<div style="position:absolute;left:2758.0px;top:535.11px;font-family:'Liberation Mono', monospace;font-size:24px;line-height:24px;font-weight:400;color:#e2e2e5;white-space:pre;">256</div>
<div style="position:absolute;left:3099.0px;top:535.11px;font-family:'Liberation Mono', monospace;font-size:24px;line-height:24px;font-weight:400;color:#e2e2e5;white-space:pre;">warn</div>
<div style="position:absolute;left:2837.0px;top:624.42px;font-family:'Liberation Mono', monospace;font-size:30px;line-height:30px;font-weight:400;color:#e2e2e5;white-space:pre;">Loading...</div>
<div style="position:absolute;left:522.5px;top:1127.48px;font-family:'Liberation Mono', monospace;font-size:26px;line-height:26px;font-weight:400;color:#e2e2e5;white-space:pre;">SeverityText over time</div>
<div style="position:absolute;left:3664.0px;top:1176.0px;width:136.0px;height:74.0px;box-sizing:border-box;background:#1f2126;border-radius:12px;"></div>
<svg style="position:absolute;left:3664.0px;top:1176.0px;" width="136.0" height="74.0" viewBox="0 0 136 74" fill="none"><path d="M33 22 V49.2 H60.5" stroke="#dddddd" stroke-width="2"/><path d="M37 42.5 L44 33.5 L49.5 38.5 L58 28" stroke="#dddddd" stroke-width="2"/><rect x="78.8" y="40.8" width="5.2" height="7.2" rx="1.4" stroke="#6ff1c2" stroke-width="1.9"/><rect x="87.8" y="33.8" width="5.2" height="14.2" rx="1.4" stroke="#6ff1c2" stroke-width="1.9"/><rect x="96.8" y="25" width="5.2" height="23" rx="1.4" stroke="#6ff1c2" stroke-width="1.9"/></svg>
<div style="position:absolute;right:3236.0px;top:1791.15px;font-family:'Liberation Mono', monospace;font-size:22px;line-height:22px;font-weight:400;color:#6b6b6e;white-space:pre;">0</div>
<div style="position:absolute;right:3236.0px;top:1637.65px;font-family:'Liberation Mono', monospace;font-size:22px;line-height:22px;font-weight:400;color:#6b6b6e;white-space:pre;">300</div>
<div style="position:absolute;right:3236.0px;top:1484.15px;font-family:'Liberation Mono', monospace;font-size:22px;line-height:22px;font-weight:400;color:#6b6b6e;white-space:pre;">600</div>
<div style="position:absolute;right:3236.0px;top:1330.65px;font-family:'Liberation Mono', monospace;font-size:22px;line-height:22px;font-weight:400;color:#6b6b6e;white-space:pre;">900</div>
<div style="position:absolute;right:3236.0px;top:1183.15px;font-family:'Liberation Mono', monospace;font-size:22px;line-height:22px;font-weight:400;color:#6b6b6e;white-space:pre;">1.2K</div>
<svg style="position:absolute;left:0;top:0" width="3812" height="1906" viewBox="0 0 3812 1906"><rect x="590.5" y="1185.0" width="2" height="615" fill="#5e5e60"/><rect x="591.5" y="1799.0" width="3198.5" height="2" fill="#5e5e60"/><rect x="579.5" y="1799.0" width="12" height="2" fill="#5e5e60"/><rect x="579.5" y="1645.5" width="12" height="2" fill="#5e5e60"/><rect x="579.5" y="1492.0" width="12" height="2" fill="#5e5e60"/><rect x="579.5" y="1338.5" width="12" height="2" fill="#5e5e60"/><rect x="579.5" y="1185.0" width="12" height="2" fill="#5e5e60"/><rect x="590.5" y="1800.0" width="2" height="11.5" fill="#5e5e60"/><rect x="1056.8936170212764" y="1800.0" width="2" height="11.5" fill="#5e5e60"/><rect x="1390.0319148936169" y="1800.0" width="2" height="11.5" fill="#5e5e60"/><rect x="1723.1702127659573" y="1800.0" width="2" height="11.5" fill="#5e5e60"/><rect x="2056.308510638298" y="1800.0" width="2" height="11.5" fill="#5e5e60"/><rect x="2456.074468085106" y="1800.0" width="2" height="11.5" fill="#5e5e60"/><rect x="2855.8404255319147" y="1800.0" width="2" height="11.5" fill="#5e5e60"/><rect x="3188.978723404255" y="1800.0" width="2" height="11.5" fill="#5e5e60"/><rect x="3722.0" y="1800.0" width="2" height="11.5" fill="#5e5e60"/><rect x="565.50" y="1793.60" width="52.0" height="7.40" fill="#4cbf8e"/><rect x="632.13" y="1785.16" width="52.0" height="15.84" fill="#4cbf8e"/><rect x="698.76" y="1791.30" width="52.0" height="9.70" fill="#4cbf8e"/><rect x="765.38" y="1792.84" width="52.0" height="8.16" fill="#4cbf8e"/><rect x="832.01" y="1786.18" width="52.0" height="14.82" fill="#4cbf8e"/><rect x="898.64" y="1797.44" width="52.0" height="3.56" fill="#4cbf8e"/><rect x="965.27" y="1787.21" width="52.0" height="13.79" fill="#4cbf8e"/><rect x="1031.89" y="1791.81" width="52.0" height="9.19" fill="#4cbf8e"/><rect x="1098.52" y="1786.18" width="52.0" height="14.82" fill="#4cbf8e"/><rect x="1165.15" y="1782.09" width="52.0" height="18.91" fill="#4cbf8e"/><rect x="1165.15" y="1781.07" width="52.0" height="1.02" fill="#f6b83f"/><rect x="1231.78" y="1779.53" width="52.0" height="21.47" fill="#4cbf8e"/><rect x="1298.40" y="1767.77" width="52.0" height="33.23" fill="#4cbf8e"/><rect x="1365.03" y="1744.23" width="52.0" height="56.77" fill="#4cbf8e"/><rect x="1431.66" y="1752.41" width="52.0" height="48.59" fill="#4cbf8e"/><rect x="1498.29" y="1691.01" width="52.0" height="109.99" fill="#4cbf8e"/><rect x="1498.29" y="1688.97" width="52.0" height="2.05" fill="#f6b83f"/><rect x="1564.91" y="1706.37" width="52.0" height="94.63" fill="#4cbf8e"/><rect x="1564.91" y="1705.34" width="52.0" height="1.02" fill="#f6b83f"/><rect x="1631.54" y="1593.80" width="52.0" height="207.20" fill="#4cbf8e"/><rect x="1631.54" y="1592.78" width="52.0" height="1.02" fill="#f6b83f"/><rect x="1698.17" y="1599.43" width="52.0" height="201.57" fill="#4cbf8e"/><rect x="1698.17" y="1596.36" width="52.0" height="3.07" fill="#f6b83f"/><rect x="1764.80" y="1415.23" width="52.0" height="385.77" fill="#4cbf8e"/><rect x="1764.80" y="1404.99" width="52.0" height="10.23" fill="#f6b83f"/><rect x="1831.43" y="1380.43" width="52.0" height="420.57" fill="#4cbf8e"/><rect x="1831.43" y="1374.29" width="52.0" height="6.14" fill="#f6b83f"/><rect x="1898.05" y="1271.96" width="52.0" height="529.04" fill="#4cbf8e"/><rect x="1898.05" y="1267.87" width="52.0" height="4.09" fill="#f6b83f"/><rect x="1964.68" y="1312.89" width="52.0" height="488.11" fill="#4cbf8e"/><rect x="1964.68" y="1306.75" width="52.0" height="6.14" fill="#f6b83f"/><rect x="2031.31" y="1498.63" width="52.0" height="302.37" fill="#4cbf8e"/><rect x="2031.31" y="1496.58" width="52.0" height="2.05" fill="#f6b83f"/><rect x="2097.94" y="1491.98" width="52.0" height="309.02" fill="#4cbf8e"/><rect x="2097.94" y="1488.91" width="52.0" height="3.07" fill="#f6b83f"/><rect x="2164.56" y="1657.24" width="52.0" height="143.76" fill="#4cbf8e"/><rect x="2164.56" y="1656.22" width="52.0" height="1.02" fill="#f6b83f"/><rect x="2231.19" y="1638.83" width="52.0" height="162.17" fill="#4cbf8e"/><rect x="2231.19" y="1635.76" width="52.0" height="3.07" fill="#f6b83f"/><rect x="2297.82" y="1439.79" width="52.0" height="361.21" fill="#4cbf8e"/><rect x="2297.82" y="1434.67" width="52.0" height="5.12" fill="#f6b83f"/><rect x="2364.45" y="1452.58" width="52.0" height="348.42" fill="#4cbf8e"/><rect x="2364.45" y="1447.46" width="52.0" height="5.12" fill="#f6b83f"/><rect x="2431.07" y="1353.83" width="52.0" height="447.17" fill="#4cbf8e"/><rect x="2431.07" y="1347.69" width="52.0" height="6.14" fill="#f6b83f"/><rect x="2497.70" y="1337.45" width="52.0" height="463.55" fill="#4cbf8e"/><rect x="2497.70" y="1329.27" width="52.0" height="8.19" fill="#f6b83f"/><rect x="2564.33" y="1533.42" width="52.0" height="267.58" fill="#4cbf8e"/><rect x="2564.33" y="1532.40" width="52.0" height="1.02" fill="#f6b83f"/><rect x="2630.96" y="1555.93" width="52.0" height="245.07" fill="#4cbf8e"/><rect x="2630.96" y="1554.91" width="52.0" height="1.02" fill="#f6b83f"/><rect x="2697.59" y="1670.55" width="52.0" height="130.45" fill="#4cbf8e"/><rect x="2764.21" y="1674.64" width="52.0" height="126.36" fill="#4cbf8e"/><rect x="2764.21" y="1672.60" width="52.0" height="2.05" fill="#f6b83f"/><rect x="2830.84" y="1587.66" width="52.0" height="213.34" fill="#4cbf8e"/><rect x="2897.47" y="1607.10" width="52.0" height="193.90" fill="#4cbf8e"/><rect x="2897.47" y="1601.98" width="52.0" height="5.12" fill="#f6b83f"/><rect x="2964.10" y="1508.86" width="52.0" height="292.14" fill="#4cbf8e"/><rect x="2964.10" y="1506.82" width="52.0" height="2.05" fill="#f6b83f"/><rect x="3030.72" y="1480.21" width="52.0" height="320.79" fill="#4cbf8e"/><rect x="3030.72" y="1478.16" width="52.0" height="2.05" fill="#f6b83f"/><rect x="3097.35" y="1352.29" width="52.0" height="448.71" fill="#4cbf8e"/><rect x="3097.35" y="1341.03" width="52.0" height="11.26" fill="#f6b83f"/><rect x="3163.98" y="1347.69" width="52.0" height="453.31" fill="#4cbf8e"/><rect x="3163.98" y="1336.43" width="52.0" height="11.26" fill="#f6b83f"/><rect x="3230.61" y="1248.42" width="52.0" height="552.58" fill="#4cbf8e"/><rect x="3230.61" y="1237.17" width="52.0" height="11.26" fill="#f6b83f"/><rect x="3297.23" y="1241.26" width="52.0" height="559.74" fill="#4cbf8e"/><rect x="3297.23" y="1235.12" width="52.0" height="6.14" fill="#f6b83f"/><rect x="3363.86" y="1438.76" width="52.0" height="362.24" fill="#4cbf8e"/><rect x="3363.86" y="1435.69" width="52.0" height="3.07" fill="#f6b83f"/><rect x="3430.49" y="1448.48" width="52.0" height="352.52" fill="#4cbf8e"/><rect x="3430.49" y="1446.44" width="52.0" height="2.05" fill="#f6b83f"/><rect x="3497.12" y="1638.31" width="52.0" height="162.69" fill="#4cbf8e"/><rect x="3497.12" y="1635.24" width="52.0" height="3.07" fill="#f6b83f"/><rect x="3563.74" y="1656.22" width="52.0" height="144.78" fill="#4cbf8e"/><rect x="3630.37" y="1742.18" width="52.0" height="58.82" fill="#4cbf8e"/><rect x="3697.00" y="1756.00" width="52.0" height="45.00" fill="#4cbf8e"/><rect x="3697.00" y="1754.97" width="52.0" height="1.02" fill="#f6b83f"/></svg>
<div style="position:absolute;left:502.5px;top:1815.55px;font-family:'Liberation Mono', monospace;font-size:22px;line-height:22px;font-weight:400;color:#6b6b6e;white-space:pre;">Oct 27 10:00:00 AM</div>
<div style="position:absolute;left:-942.1px;width:4000px;text-align:center;top:1815.55px;font-family:'Liberation Mono', monospace;font-size:22px;line-height:22px;font-weight:400;color:#6b6b6e;white-space:pre;">1:30:00 PM</div>
<div style="position:absolute;left:-609.0px;width:4000px;text-align:center;top:1815.55px;font-family:'Liberation Mono', monospace;font-size:22px;line-height:22px;font-weight:400;color:#6b6b6e;white-space:pre;">4:00:00 PM</div>
<div style="position:absolute;left:-275.8px;width:4000px;text-align:center;top:1815.55px;font-family:'Liberation Mono', monospace;font-size:22px;line-height:22px;font-weight:400;color:#6b6b6e;white-space:pre;">6:30:00 PM</div>
<div style="position:absolute;left:57.3px;width:4000px;text-align:center;top:1815.55px;font-family:'Liberation Mono', monospace;font-size:22px;line-height:22px;font-weight:400;color:#6b6b6e;white-space:pre;">9:00:00 PM</div>
<div style="position:absolute;left:457.1px;width:4000px;text-align:center;top:1815.55px;font-family:'Liberation Mono', monospace;font-size:22px;line-height:22px;font-weight:400;color:#6b6b6e;white-space:pre;">12:00:00 AM</div>
<div style="position:absolute;left:856.8px;width:4000px;text-align:center;top:1815.55px;font-family:'Liberation Mono', monospace;font-size:22px;line-height:22px;font-weight:400;color:#6b6b6e;white-space:pre;">3:00:00 AM</div>
<div style="position:absolute;left:1190.0px;width:4000px;text-align:center;top:1815.55px;font-family:'Liberation Mono', monospace;font-size:22px;line-height:22px;font-weight:400;color:#6b6b6e;white-space:pre;">5:30:00 AM</div>
<div style="position:absolute;left:1723.0px;width:4000px;text-align:center;top:1815.55px;font-family:'Liberation Mono', monospace;font-size:22px;line-height:22px;font-weight:400;color:#6b6b6e;white-space:pre;">9:30:00 AM</div>
<div style="position:absolute;left:512.0px;top:1871.0px;width:24.0px;height:2.0px;box-sizing:border-box;background:#4cbf8e;"></div>
<div style="position:absolute;left:545.0px;top:1863.15px;font-family:'Liberation Mono', monospace;font-size:22px;line-height:22px;font-weight:400;color:#4cbf8e;white-space:pre;">info</div>
<div style="position:absolute;left:613.0px;top:1871.0px;width:24.0px;height:2.0px;box-sizing:border-box;background:#4cbf8e;"></div>
<div style="position:absolute;left:645.0px;top:1863.15px;font-family:'Liberation Mono', monospace;font-size:22px;line-height:22px;font-weight:400;color:#4cbf8e;white-space:pre;">debug</div>
<div style="position:absolute;left:727.0px;top:1871.0px;width:23.0px;height:2.0px;box-sizing:border-box;background:#f6b83f;"></div>
<div style="position:absolute;left:758.5px;top:1863.15px;font-family:'Liberation Mono', monospace;font-size:22px;line-height:22px;font-weight:400;color:#f6b83f;white-space:pre;">warn</div>
<div style="position:absolute;left:0.0px;top:0.0px;width:2.0px;height:1906.0px;box-sizing:border-box;background:#434548;"></div>
<div style="position:absolute;left:3810.0px;top:0.0px;width:2.0px;height:1906.0px;box-sizing:border-box;background:#333335;"></div>
<div style="position:absolute;left:0.0px;top:1904.0px;width:3812.0px;height:2.0px;box-sizing:border-box;background:#38393b;"></div>
</div></body></html>
